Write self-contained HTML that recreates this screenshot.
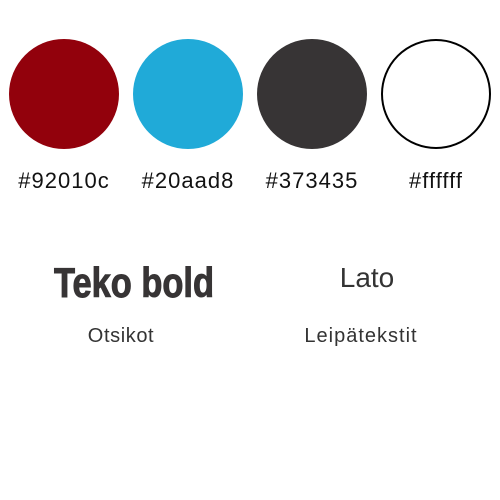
<!DOCTYPE html>
<html><head><style>
body{margin:0;width:500px;height:500px;background:#fff;position:relative;overflow:hidden;font-family:"Liberation Sans",sans-serif;}
.c{position:absolute;top:39px;width:110px;height:110px;border-radius:50%;}
.t{position:absolute;transform:translateX(-50%);white-space:nowrap;color:#111;}
</style></head><body>
<div class="c" style="left:9px;background:#92010c"></div>
<div class="c" style="left:133px;background:#20aad8"></div>
<div class="c" style="left:257px;background:#373435"></div>
<div class="c" style="left:381px;width:106px;height:106px;border:2px solid #000;background:#fff"></div>
<div class="t" style="left:64px;top:168px;font-size:22px;letter-spacing:1px">#92010c</div>
<div class="t" style="left:188px;top:168px;font-size:22px;letter-spacing:1px">#20aad8</div>
<div class="t" style="left:312px;top:168px;font-size:22px;letter-spacing:1px">#373435</div>
<div class="t" style="left:436px;top:168px;font-size:22px;letter-spacing:1px">#ffffff</div>
<div class="t" style="left:134px;top:259px;font-size:42px;font-weight:bold;color:#373435;transform:translateX(-50%) scaleX(0.82);-webkit-text-stroke:1px #373435">Teko bold</div>
<div class="t" style="left:367px;top:262px;font-size:28px;color:#333">Lato</div>
<div class="t" style="left:121px;top:325px;font-size:20px;letter-spacing:0.6px;color:#333">Otsikot</div>
<div class="t" style="left:361px;top:325px;font-size:20px;letter-spacing:1px;color:#333">Leipätekstit</div>
</body></html>
